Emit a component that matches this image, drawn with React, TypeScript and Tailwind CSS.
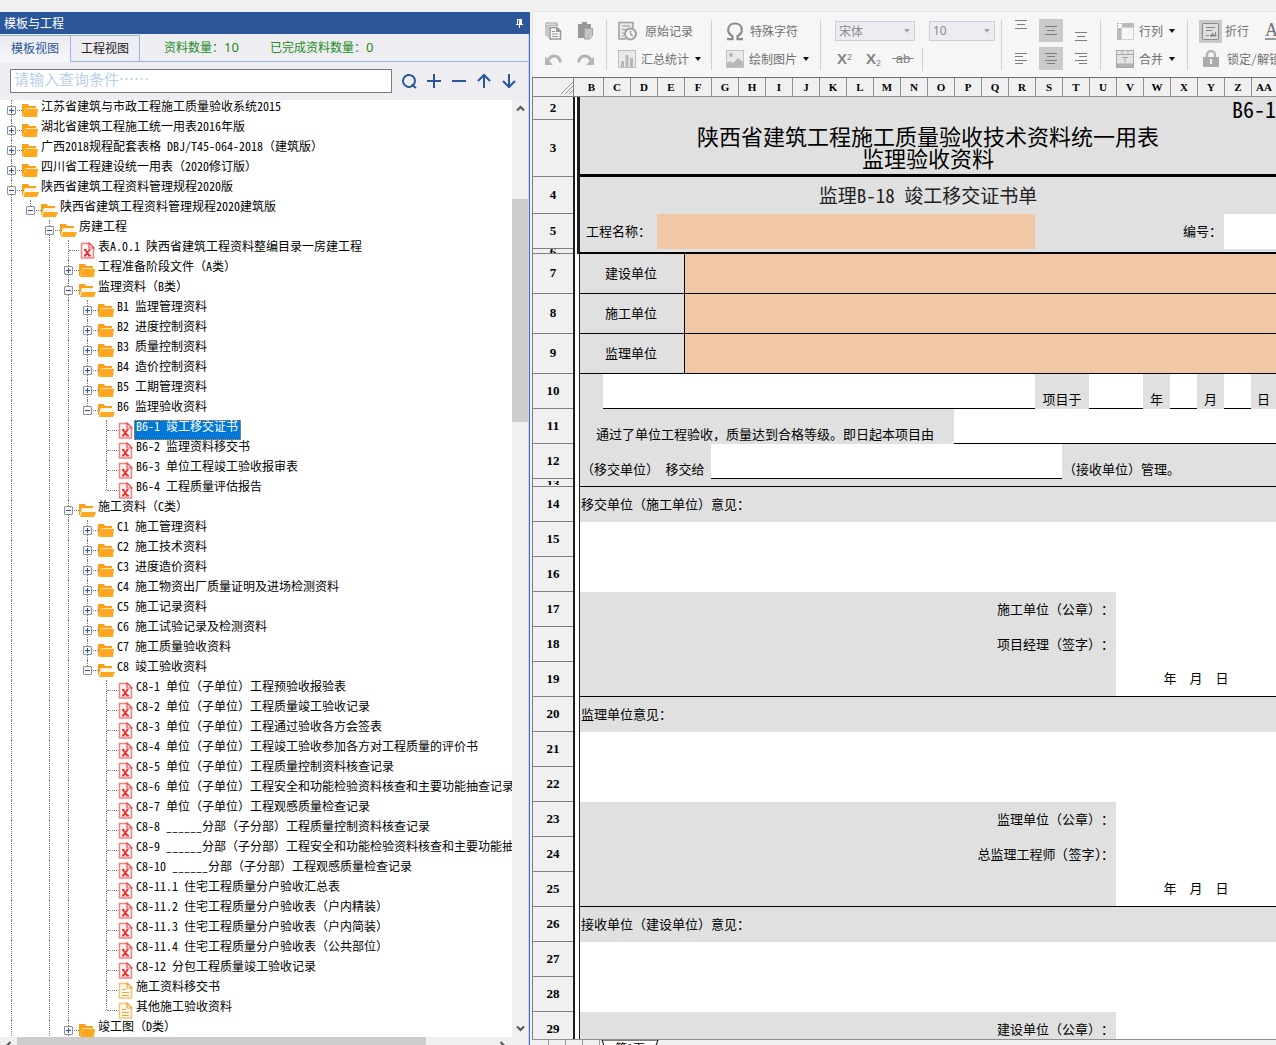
import { useState, type ReactNode } from "react";
import clsx from "clsx";

type Kind = "closed" | "open" | "excel" | "note";
type TreeRow = [depth: number, kind: Kind, label: string];

const TREE: TreeRow[] = [
  [0, "closed", "江苏省建筑与市政工程施工质量验收系统2015"],
  [0, "closed", "湖北省建筑工程施工统一用表2016年版"],
  [0, "closed", "广西2018规程配套表格 DBJ/T45-064-2018（建筑版）"],
  [0, "closed", "四川省工程建设统一用表（2020修订版）"],
  [0, "open", "陕西省建筑工程资料管理规程2020版"],
  [1, "open", "陕西省建筑工程资料管理规程2020建筑版"],
  [2, "open", "房建工程"],
  [3, "excel", "表A.0.1 陕西省建筑工程资料整编目录一房建工程"],
  [3, "closed", "工程准备阶段文件（A类）"],
  [3, "open", "监理资料（B类）"],
  [4, "closed", "B1 监理管理资料"],
  [4, "closed", "B2 进度控制资料"],
  [4, "closed", "B3 质量控制资料"],
  [4, "closed", "B4 造价控制资料"],
  [4, "closed", "B5 工期管理资料"],
  [4, "open", "B6 监理验收资料"],
  [5, "excel", "B6-1 竣工移交证书"],
  [5, "excel", "B6-2 监理资料移交书"],
  [5, "excel", "B6-3 单位工程竣工验收报审表"],
  [5, "excel", "B6-4 工程质量评估报告"],
  [3, "open", "施工资料（C类）"],
  [4, "closed", "C1 施工管理资料"],
  [4, "closed", "C2 施工技术资料"],
  [4, "closed", "C3 进度造价资料"],
  [4, "closed", "C4 施工物资出厂质量证明及进场检测资料"],
  [4, "closed", "C5 施工记录资料"],
  [4, "closed", "C6 施工试验记录及检测资料"],
  [4, "closed", "C7 施工质量验收资料"],
  [4, "open", "C8 竣工验收资料"],
  [5, "excel", "C8-1 单位（子单位）工程预验收报验表"],
  [5, "excel", "C8-2 单位（子单位）工程质量竣工验收记录"],
  [5, "excel", "C8-3 单位（子单位）工程通过验收各方会签表"],
  [5, "excel", "C8-4 单位（子单位）工程竣工验收参加各方对工程质量的评价书"],
  [5, "excel", "C8-5 单位（子单位）工程质量控制资料核查记录"],
  [5, "excel", "C8-6 单位（子单位）工程安全和功能检验资料核查和主要功能抽查记录"],
  [5, "excel", "C8-7 单位（子单位）工程观感质量检查记录"],
  [5, "excel", "C8-8 ______分部（子分部）工程质量控制资料核查记录"],
  [5, "excel", "C8-9 ______分部（子分部）工程安全和功能检验资料核查和主要功能抽查记录"],
  [5, "excel", "C8-10 ______分部（子分部）工程观感质量检查记录"],
  [5, "excel", "C8-11.1 住宅工程质量分户验收汇总表"],
  [5, "excel", "C8-11.2 住宅工程质量分户验收表（户内精装）"],
  [5, "excel", "C8-11.3 住宅工程质量分户验收表（户内简装）"],
  [5, "excel", "C8-11.4 住宅工程质量分户验收表（公共部位）"],
  [5, "excel", "C8-12 分包工程质量竣工验收记录"],
  [5, "note", "施工资料移交书"],
  [5, "note", "其他施工验收资料"],
  [3, "closed", "竣工图（D类）"],
];

// levels whose siblings go on below the last loaded row
const OPEN_ENDED = [0, 2, 3];

const hasGuide = (index: number, level: number) => {
  for (let i = index + 1; i < TREE.length; i++) {
    if (TREE[i][0] === level) return true;
    if (TREE[i][0] < level) return false;
  }
  return OPEN_ENDED.includes(level);
};

const NodeIcon = ({ kind }: { kind: Kind }) => {
  if (kind === "closed")
    return (
      <svg width="17" height="15" viewBox="0 0 17 15" className="shrink-0">
        <path d="M0 1h6l1 2h7v3H3L1 13H0z" fill="#f9a01b" />
        <path d="M4 5h11v1H3z" fill="#fde3b5" />
        <path d="M3 6h13l-1 8H1z" fill="#ffa81f" />
      </svg>
    );
  if (kind === "open")
    return (
      <svg width="17" height="15" viewBox="0 0 17 15" className="shrink-0">
        <path d="M0 1h6l1 2h7v2H3L1 12H0z" fill="#f9a01b" />
        <path d="M3 5h11v3H5l-3 5H1z" fill="#fff3dc" />
        <path d="M3 9h14l-2 5H1z" fill="#ffa81f" />
      </svg>
    );
  const excel = kind === "excel";
  return (
    <svg width="15" height="17" viewBox="0 0 15 17" className="ml-px shrink-0" fill="none">
      <path
        d="M1.500 1.500h8l4 4v10.500h-12z"
        fill={excel ? "#fff5f5" : "#fffaf0"}
        stroke={excel ? "#f88080" : "#f9c27a"}
        strokeWidth="1.500"
      />
      <path d="M9 1v5h5z" fill="#fff" stroke={excel ? "#f04848" : "#f5a430"} strokeWidth="1.200" />
      {excel ? (
        <path d="M5 8l4.500 5.500M9.500 8L5 13.500M4 7.800h2.500M8.500 7.800h2M4 13.800h2.500M8 13.800h3" stroke="#ee2a2a" strokeWidth="1.600" />
      ) : (
        <path d="M4 7.500h4M4 10.500h7M4 13.500h7" stroke="#f5a430" strokeWidth="1.200" />
      )}
    </svg>
  );
};

const TreeItem = ({
  index,
  selected,
  onSelect,
}: {
  index: number;
  selected: boolean;
  onSelect: () => void;
}) => {
  const [depth, kind, label] = TREE[index];
  const isFolder = kind === "closed" || kind === "open";

  return (
    <li className="flex h-5 items-center whitespace-nowrap pl-[2px]">
      {Array.from({ length: depth }, (_, level) => (
        <span key={level} className="h-full w-[19px] shrink-0 pl-[9px]">
          {hasGuide(index, level) && <span className="block h-full border-l border-dotted border-[#777]" />}
        </span>
      ))}
      <span className="relative h-full w-5 shrink-0">
        <span
          className={clsx(
            "absolute left-[9px] top-0 border-l border-dotted border-[#777]",
            hasGuide(index, depth) ? "h-full" : "h-[10px]"
          )}
        />
        <span className="absolute left-[10px] right-0 top-[10px] border-t border-dotted border-[#777]" />
        {isFolder && (
          <button
            aria-label={kind === "open" ? "收起" : "展开"}
            className="absolute left-[5px] top-[6px] flex size-[9px] items-center justify-center rounded-[1px] border border-[#8f8f8f] bg-[#f6f6f6]"
          >
            <svg width="5" height="5" viewBox="0 0 5 5" className="shrink-0">
              <path d={kind === "open" ? "M0 2.500h5" : "M0 2.500h5M2.500 0v5"} stroke="#2b4fa0" />
            </svg>
          </button>
        )}
      </span>
      <NodeIcon kind={kind} />
      <button
        onClick={onSelect}
        className={clsx(
          "flex h-full items-start border pl-px pr-[2px] text-left leading-[10px]",
          !isFolder && "ml-px",
          selected ? "border-dotted border-[#e08a3c] bg-[#0078d7] text-white" : "border-transparent text-black"
        )}
      >
        {label}
      </button>
    </li>
  );
};

const ToolIcon = ({ d, label }: { d: string; label: string }) => (
  <button aria-label={label} className="flex h-6 w-[25px] items-center justify-center">
    <svg width="16" height="16" viewBox="0 0 16 16" fill="none" stroke="#2b579a" strokeWidth="2">
      <path d={d} />
    </svg>
  </button>
);

const Chevron = ({ d }: { d: string }) => (
  <svg width="9" height="9" viewBox="0 0 9 9" fill="none" stroke="#555" strokeWidth="2">
    <path d={d} />
  </svg>
);

const TemplatePanel = () => {
  const [selected, setSelected] = useState(16);

  return (
    <aside className="mt-px flex w-[530px] shrink-0 flex-col bg-[#eeeef2]">
      <header className="flex h-[22px] shrink-0 items-center justify-between bg-[#2b579a] pl-1 pr-[7px] text-white">
        <h1>模板与工程</h1>
        <button aria-label="固定">
          <svg width="7" height="9" viewBox="0 0 7 9" fill="#fff">
            <path d="M1 0h5v5h1v1H4v3H3V6H0V5h1zM2 1v4h1V1z" fillRule="evenodd" />
          </svg>
        </button>
      </header>

      <div className="flex min-h-0 flex-1 flex-col border-r border-[#3d72c8]">
        <div className="flex min-h-0 flex-1 flex-col border-r border-[#c3d5f3]">
          <div className="mt-px flex h-[27px] shrink-0">
            <button className="w-[70px] border-t border-[#97b5e8] bg-gradient-to-b from-[#e9e9ef] to-[#f8f8fa] pb-[2px] text-[#2b579a]">
              模板视图
            </button>
            <button className="w-[70px] border border-[#97b5e8] pb-[2px] text-[#222]">工程视图</button>
            <div className="flex flex-1 items-center gap-[31px] border-b border-[#97b5e8] pl-6 text-[#228b22]">
              <span>
                资料数量：<span className="font-['Noto_Sans',sans-serif] text-[13px]">10</span>
              </span>
              <span>
                已完成资料数量：<span className="font-['Noto_Sans',sans-serif] text-[13px]">0</span>
              </span>
            </div>
          </div>

          <div className="flex h-[38px] shrink-0 items-center pl-[10px] pr-1">
            <input
              aria-label="查询条件"
              placeholder="请输入查询条件……"
              className="h-6 min-w-0 flex-1 border border-[#7a7a7a] bg-white px-[3px] pb-[6px] text-[15px] leading-5 outline-none placeholder:text-[#b8cfe8]"
            />
            <div className="flex w-[132px] pl-1">
              <ToolIcon label="查询" d="M14 8a6 6 0 1 0-2.500 4.800M10.500 11.500l4.500 3.500M14 8c0 2-.8 3.600-2.500 4.800" />
              <ToolIcon label="添加" d="M8 1v14M1 8h14" />
              <ToolIcon label="删除" d="M1 8h14" />
              <ToolIcon label="上移" d="M8 15V2M2 8l6-6 6 6" />
              <ToolIcon label="下移" d="M8 1v13M2 8l6 6 6-6" />
            </div>
          </div>

          <div className="flex min-h-0 flex-1">
            <ul className="min-w-0 flex-1 overflow-hidden bg-white">
              {TREE.map((row, index) => (
                <TreeItem
                  key={row[2]}
                  index={index}
                  selected={index === selected}
                  onSelect={() => setSelected(index)}
                />
              ))}
            </ul>
            <div className="flex w-4 shrink-0 flex-col items-center bg-[#f0f0f0]">
              <span className="flex h-[99px] w-full items-start justify-center pt-1">
                <Chevron d="M1 6.500l3.500-3.500L8 6.500" />
              </span>
              <span className="h-[223px] w-full bg-[#cdcdcd]" />
              <span className="flex w-full flex-1 items-end justify-center pb-1">
                <Chevron d="M1 2.500l3.500 3.500L8 2.500" />
              </span>
            </div>
          </div>

          <div className="flex h-2 shrink-0 items-start overflow-hidden bg-[#f0f0f0]">
            <span className="flex w-[17px] justify-center pt-1">
              <Chevron d="M6.500 1L3 4.500 6.500 8" />
            </span>
            <span className="h-full w-[409px] bg-[#cdcdcd]" />
            <span className="flex flex-1 justify-end pr-[21px] pt-1">
              <Chevron d="M2.500 1L6 4.500 2.500 8" />
            </span>
          </div>
        </div>
      </div>
    </aside>
  );
};

const Caret = ({ color = "#111" }: { color?: string }) => (
  <svg width="6" height="4" viewBox="0 0 6 4" fill={color} className="shrink-0">
    <path d="M0 0h6L3 4z" />
  </svg>
);

const Divider = () => <span className="mt-[3px] h-[50px] w-px shrink-0 bg-[#cfcfcf]" />;

const LabelButton = ({
  icon,
  children,
  menu,
  className,
}: {
  icon: ReactNode;
  children: ReactNode;
  menu?: boolean;
  className?: string;
}) => (
  <button className={clsx("flex h-7 items-center whitespace-nowrap", className)}>
    {icon}
    <span>{children}</span>
    {menu && (
      <span className="ml-px">
        <Caret />
      </span>
    )}
  </button>
);

const AlignButton = ({ d, label, active }: { d: string; label: string; active?: boolean }) => (
  <button
    aria-label={label}
    className={clsx("flex h-[23px] w-6 items-center justify-center", active && "bg-[#cacaca]")}
  >
    <svg width="14" height="23" viewBox="0 0 14 23" stroke="#7c7c7c" fill="none">
      <path d={d} />
    </svg>
  </button>
);

const ToolSelect = ({ label, value, className }: { label: string; value: string; className: string }) => (
  <span className={clsx("relative flex h-5 items-center", className)}>
    <select
      aria-label={label}
      className="h-full w-full appearance-none border border-[#cdcee0] bg-[#ededf1] px-[3px] text-[#8a8a8a]"
    >
      <option>{value}</option>
    </select>
    <span className="pointer-events-none absolute right-[5px] flex">
      <Caret color="#a9a9a9" />
    </span>
  </span>
);

const Toolbar = () => (
  <div className="flex h-[66px] shrink-0 overflow-hidden border-l border-t border-[#e3e3ee] bg-[#f6f6f6] pt-[5px] text-[#707070]">
    <div className="grid w-[73px] shrink-0 grid-cols-2 content-start px-[5px]">
      <button aria-label="复制" className="flex h-7 items-center justify-center">
        <svg width="17" height="18" viewBox="0 0 17 18" fill="none" stroke="#999">
          <path d="M1 14V1h11v2" />
          <path d="M3 15.500V3.200h10" />
          <path d="M5 5.500h7l3.500 3.500v8H5z" fill="#f4f4f4" strokeWidth="1.500" />
          <path d="M11 5l5 5h-5z" fill="#999" stroke="none" />
          <path d="M7 9.500h3M7 12h6M7 14.500h6" />
        </svg>
      </button>
      <button aria-label="粘贴" className="flex h-7 items-center justify-center">
        <svg width="17" height="18" viewBox="0 0 17 18">
          <path d="M1 2h4V0h5v2h4v4H7v10H1z" fill="#999" />
          <path d="M7.500 6.500h8v7l-3 3.500h-5z" fill="#c6c6c6" stroke="#a2a2a2" />
          <path d="M12 17v-4h4z" fill="#eee" stroke="#a2a2a2" strokeWidth=".8" />
        </svg>
      </button>
      <button aria-label="撤销" className="flex h-7 items-center justify-center">
        <svg width="17" height="13" viewBox="0 0 17 13">
          <path d="M3 7.500C6 1.500 14 1 15.500 9.500" fill="none" stroke="#b4b4b4" strokeWidth="3" />
          <path d="M0 3.500V12h8z" fill="#b4b4b4" />
        </svg>
      </button>
      <button aria-label="重做" className="flex h-7 items-center justify-center">
        <svg width="17" height="13" viewBox="0 0 17 13">
          <path d="M14 7.500C11 1.500 3 1 1.500 9.500" fill="none" stroke="#b4b4b4" strokeWidth="3" />
          <path d="M17 3.500V12H9z" fill="#b4b4b4" />
        </svg>
      </button>
    </div>
    <Divider />
    <div className="w-[104px] shrink-0 pl-[11px]">
      <LabelButton
        className="gap-2"
        icon={
          <svg width="19" height="20" viewBox="0 0 19 20" fill="none" stroke="#a0a0a0">
            <path d="M8 18H1V1.500h14V7" fill="#e8e8e8" strokeWidth="1.500" />
            <path d="M4 5h8M4 8.500h5M4 12h2M4 15h2" strokeWidth="1.200" />
            <circle cx="12.500" cy="13" r="5.500" fill="#f6f6f6" strokeWidth="2" />
            <path d="M12.500 9.500V13l2.500 2.500" strokeWidth="1.500" />
          </svg>
        }
      >
        原始记录
      </LabelButton>
      <LabelButton
        className="gap-[5px]"
        menu
        icon={
          <svg width="18" height="18" viewBox="0 0 18 18">
            <rect x=".5" y=".5" width="17" height="17" fill="#e9e9e9" stroke="#bdbdbd" />
            <path d="M3 11h3v6H3zM7.500 5h3v12h-3zM12 8h3v9h-3z" fill="#b8b8b8" />
          </svg>
        }
      >
        汇总统计
      </LabelButton>
    </div>
    <Divider />
    <div className="w-[108px] shrink-0 pl-[14px]">
      <LabelButton
        className="gap-[6px]"
        icon={
          <svg width="18" height="19" viewBox="0 0 18 19" fill="none" stroke="#8c8c8c" strokeWidth="2.200">
            <path d="M1 17.200h5.500v-3C3.500 12.500 2.200 10.500 2.200 8 2.200 4 5 1.500 9 1.500s6.800 2.500 6.800 6.500c0 2.500-1.300 4.500-4.300 6.200v3H17" />
          </svg>
        }
      >
        特殊字符
      </LabelButton>
      <LabelButton
        className="gap-[5px]"
        menu
        icon={
          <svg width="18" height="18" viewBox="0 0 18 18">
            <rect x=".5" y=".5" width="17" height="17" fill="#e9e9e9" stroke="#c2c2c2" />
            <circle cx="5" cy="5" r="2" fill="#b4b4b4" />
            <path d="M1 13l3-2 3 2 5-5 5 4v5H1z" fill="#b8b8b8" />
          </svg>
        }
      >
        绘制图片
      </LabelButton>
    </div>
    <Divider />
    <div className="w-[180px] shrink-0 pl-[14px]">
      <div className="flex h-7 items-center gap-[14px]">
        <ToolSelect label="字体" value="宋体" className="w-20" />
        <ToolSelect label="字号" value="10" className="w-[66px] font-['Noto_Sans',sans-serif]" />
      </div>
      <div className="flex h-7 items-center font-['Liberation_Sans',sans-serif] text-[#858585]">
        <button className="w-[29px] pl-[2px] text-left text-[15px] font-bold leading-5">
          X<sup className="text-[9px] font-normal">2</sup>
        </button>
        <button className="w-[28px] pl-[2px] text-left text-[15px] font-bold leading-5">
          X<sub className="text-[9px] font-normal">2</sub>
        </button>
        <button className="w-[22px] text-[13px] leading-5 line-through">&nbsp;ab&nbsp;</button>
        <span className="ml-2 h-[23px] w-px bg-[#cfcfcf]" />
      </div>
    </div>
    <Divider />
    <div className="grid w-[98px] shrink-0 grid-cols-[30px_30px_24px] content-start gap-y-[5px] pl-[7px] pt-[2px]">
      <AlignButton label="顶端对齐" d="M1 1.500h12M3 5.500h8M1 9.500h12" />
      <AlignButton label="垂直居中" active d="M1 7.500h12M3 11.500h8M1 15.500h12" />
      <AlignButton label="底端对齐" d="M1 13.500h12M3 17.500h8M1 21.500h12" />
      <AlignButton label="左对齐" d="M1 6.500h12M1 9.500h8M1 13.500h12M1 16.500h8" />
      <AlignButton label="居中" active d="M1 6.500h12M3 9.500h8M1 13.500h12M3 16.500h8" />
      <AlignButton label="右对齐" d="M1 6.500h12M5 9.500h8M1 13.500h12M5 16.500h8" />
    </div>
    <Divider />
    <div className="w-[86px] shrink-0 pl-[15px]">
      <LabelButton
        className="gap-[5px]"
        menu
        icon={
          <svg width="18" height="18" viewBox="0 0 18 18">
            <path d="M5.500 5.500h12v12h-12z" fill="#f6f6f6" stroke="#d0d0d0" />
            <path d="M6 1h12v4H6zM1 6h4v12H1z" fill="#bababa" />
            <path d="M1.500 5V1.500H5" fill="none" stroke="#aaa" strokeDasharray="2 1" />
          </svg>
        }
      >
        行列
      </LabelButton>
      <LabelButton
        className="gap-[5px]"
        menu
        icon={
          <svg width="18" height="18" viewBox="0 0 18 18" fill="none" stroke="#a8a8a8">
            <rect x=".5" y=".5" width="17" height="17" fill="#e4e4e4" />
            <path d="M.5 4.500h17M6 .5v4M12 .5v4M6 7.500h6M9 7.500v5" />
            <path d="M1 14h16v3H1z" fill="#b8b8b8" />
          </svg>
        }
      >
        合并
      </LabelButton>
    </div>
    <Divider />
    <div className="shrink-0 pl-[11px]">
      <div className="flex h-7 items-center">
        <LabelButton
          className="gap-[3px]"
          icon={
            <span className="flex size-[23px] items-center justify-center bg-[#cacaca]">
              <svg width="17" height="17" viewBox="0 0 17 17" fill="none" stroke="#888">
                <rect x=".5" y=".5" width="16" height="16" rx="1" fill="#dedede" />
                <path d="M4 4.500h9M4 7.500h6M4 12.500h3M13.500 9v3.500" />
                <path d="M8 13l3-3v2h3v1z" fill="#888" />
              </svg>
            </span>
          }
        >
          折行
        </LabelButton>
        <button className="ml-4 border-b-2 border-[#999] font-['Liberation_Serif',serif] text-[18px] leading-[15px]">
          A
        </button>
      </div>
      <LabelButton
        className="gap-2 pl-1"
        icon={
          <svg width="16" height="18" viewBox="0 0 16 18">
            <path d="M4 8V5a4 4 0 0 1 8 0v3" fill="none" stroke="#b4b4b4" strokeWidth="2.500" />
            <rect x="0" y="7" width="16" height="10" fill="#ababab" />
            <path d="M7 9h2v5H7z" fill="#f4f4f4" />
          </svg>
        }
      >
        锁定/解锁
      </LabelButton>
    </div>
  </div>
);

const COLUMNS = "B C D E F G H I J K L M N O P Q R S T U V W X Y Z AA".split(" ");

const Row = ({
  n,
  height,
  framed,
  children,
}: {
  n: number;
  height: string;
  framed?: boolean;
  children: ReactNode;
}) => {
  const clipped = n === 6 || n === 13;

  return (
    <tr className={height}>
      <th
        scope="row"
        className={clsx(
          "border-b border-l border-[#808080] bg-[#f0f0f0] font-['Liberation_Serif',serif] text-[13px] font-bold leading-none",
          !clipped && "pb-[2px]"
        )}
      >
        {clipped ? <span className="block h-1 overflow-hidden leading-[6px]">{n}</span> : n}
      </th>
      <td
        className={clsx(
          "border-l-2 border-[#1c1c1c] bg-white",
          framed ? "border-r-[3px]" : "border-r"
        )}
      />
      {children}
    </tr>
  );
};

const GRAY = "bg-[#e0e0e0]";
const ORANGE = "bg-[#f0c8a5]";
const LINE = "border-b border-black";
const LOW = "align-bottom";
const H = "h-[35px]";

const UnitRow = ({ n, children }: { n: number; children: ReactNode }) => (
  <Row n={n} height="h-10">
    <td colSpan={4} className={clsx(GRAY, LINE, "pr-[2px] text-center")}>
      {children}
    </td>
    <td colSpan={22} className={clsx(ORANGE, LINE, "border-l")} />
  </Row>
);

const OpinionBlock = ({
  start,
  title,
  signers,
}: {
  start: number;
  title: string;
  signers: string[];
}) => (
  <>
    <Row n={start} height={H}>
      <td colSpan={26} className={clsx(GRAY, "pl-px")}>
        {title}
      </td>
    </Row>
    <Row n={start + 1} height={H}>
      <td colSpan={26} />
    </Row>
    <Row n={start + 2} height={H}>
      <td colSpan={26} />
    </Row>
    {signers.map((signer, i) => (
      <Row key={signer} n={start + 3 + i} height={H}>
        <td colSpan={20} className={clsx(GRAY, "pr-[2px] text-right")}>
          {signer}
        </td>
        <td colSpan={6} />
      </Row>
    ))}
    {signers.length > 1 && (
      <Row n={start + 5} height={H}>
        <td colSpan={20} className={clsx(GRAY, LINE)} />
        <td colSpan={6} className={clsx(LINE, "text-center")}>
          年&nbsp;&nbsp;月&nbsp;&nbsp;日
        </td>
      </Row>
    )}
  </>
);

const Sheet = () => (
  <div className="min-h-0 flex-1 overflow-hidden border-t border-[#707070] bg-white">
    <table className="w-full table-fixed border-separate border-spacing-0 whitespace-nowrap text-[13px] leading-4 text-black [&_td]:pb-[2px]">
      <colgroup>
        <col className="w-[41px]" />
        <col className="w-[7px]" />
        <col className="w-[23px]" />
        {COLUMNS.slice(1, -1).map((c) => (
          <col key={c} className="w-[27px]" />
        ))}
        <col />
      </colgroup>
      <thead>
        <tr className="h-[19px] bg-[#f0f0f0] font-['Liberation_Serif',serif] text-[11px] leading-none">
          <td className="border-b border-l border-[#808080]">
            <svg width="12" height="12" viewBox="0 0 12 12" stroke="#999" className="ml-auto mt-1">
              <path d="M0 12L12 0M4 12l8-8M8 12l4-4" />
            </svg>
          </td>
          <td className="border-b border-l border-[#808080]" />
          {COLUMNS.map((c, i) => (
            <th
              key={c}
              scope="col"
              className={clsx("border-b border-[#909090] font-semibold", i > 0 && "border-l")}
            >
              {c}
            </th>
          ))}
        </tr>
      </thead>
      <tbody>
        <Row n={2} height="h-[23px]" framed>
          <td colSpan={26} className={clsx(GRAY, "text-right text-[22px] leading-5")}>
            B6-1
          </td>
        </Row>
        <Row n={3} height="h-[57px]" framed>
          <td
            colSpan={26}
            className={clsx(GRAY, "border-b-[3px] border-black text-center text-[22px] leading-[22px]")}
          >
            陕西省建筑工程施工质量验收技术资料统一用表
            <br />
            监理验收资料
          </td>
        </Row>
        <Row n={4} height="h-[37px]" framed>
          <td colSpan={26} className={clsx(GRAY, "text-center text-[19px] leading-6 text-[#222]")}>
            监理B-18 竣工移交证书单
          </td>
        </Row>
        <Row n={5} height={H} framed>
          <td colSpan={3} className={clsx(GRAY, "pl-[6px]")}>
            工程名称：
          </td>
          <td colSpan={14} className={ORANGE} />
          <td colSpan={7} className={clsx(GRAY, "pr-[2px] text-right")}>
            编号：
          </td>
          <td colSpan={2} />
        </Row>
        <Row n={6} height="h-[5px]" framed>
          <td colSpan={26} className={clsx(GRAY, "border-b-2 border-black")} />
        </Row>
        <UnitRow n={7}>建设单位</UnitRow>
        <UnitRow n={8}>施工单位</UnitRow>
        <UnitRow n={9}>监理单位</UnitRow>
        <Row n={10} height={H}>
          <td className={GRAY} />
          <td colSpan={16} className={LINE} />
          <td colSpan={2} className={clsx(GRAY, LOW, "text-center")}>
            项目于
          </td>
          <td colSpan={2} className={LINE} />
          <td className={clsx(GRAY, LOW, "text-center")}>年</td>
          <td className={LINE} />
          <td className={clsx(GRAY, LOW, "text-center")}>月</td>
          <td className={LINE} />
          <td className={clsx(GRAY, LOW, "text-center")}>日</td>
        </Row>
        <Row n={11} height={H}>
          <td colSpan={14} className={clsx(GRAY, LOW, "pl-4")}>
            通过了单位工程验收，质量达到合格等级。即日起本项目由
          </td>
          <td colSpan={12} className={LINE} />
        </Row>
        <Row n={12} height={H}>
          <td colSpan={5} className={clsx(GRAY, LOW, "pl-px")}>
            （移交单位）&nbsp;移交给
          </td>
          <td colSpan={13} className={LINE} />
          <td colSpan={8} className={clsx(GRAY, LOW, "pl-px")}>
            （接收单位）管理。
          </td>
        </Row>
        <Row n={13} height="h-2">
          <td colSpan={26} className={clsx(GRAY, LINE)} />
        </Row>
        <OpinionBlock
          start={14}
          title="移交单位（施工单位）意见："
          signers={["施工单位（公章）：", "项目经理（签字）："]}
        />
        <OpinionBlock
          start={20}
          title="监理单位意见："
          signers={["监理单位（公章）：", "总监理工程师 (签字)："]}
        />
        <OpinionBlock start={26} title="接收单位（建设单位）意见：" signers={["建设单位（公章）："]} />
      </tbody>
    </table>
  </div>
);

const SheetTabs = () => (
  <div className="flex h-[6px] shrink-0 items-start overflow-hidden border-t border-[#909090] bg-[#f0f0f0]">
    {["首页", "上一页", "下一页", "末页"].map((name) => (
      <button key={name} aria-label={name} className="h-4 w-[17px] border-r border-[#999]" />
    ))}
    <button className="relative h-4 w-[60px] text-[12px] leading-[16px] text-black">
      <svg width="60" height="16" viewBox="0 0 60 16" className="absolute inset-0">
        <path d="M2 0l6 16h44l6-16z" fill="#fff" stroke="#000" />
      </svg>
      <span className="relative">第1页</span>
    </button>
  </div>
);

const App = () => (
  <div className="flex h-screen flex-col overflow-hidden bg-[#f0f0f0] pt-[11px] font-['Noto_Sans_Mono_CJK_SC','Noto_Sans_CJK_SC',sans-serif] text-xs [text-spacing-trim:space-all]">
    <div className="flex min-h-0 flex-1">
      <TemplatePanel />
      <main className="ml-[2px] flex min-w-0 flex-1 flex-col">
        <Toolbar />
        <Sheet />
        <SheetTabs />
      </main>
    </div>
  </div>
);

export default App;
